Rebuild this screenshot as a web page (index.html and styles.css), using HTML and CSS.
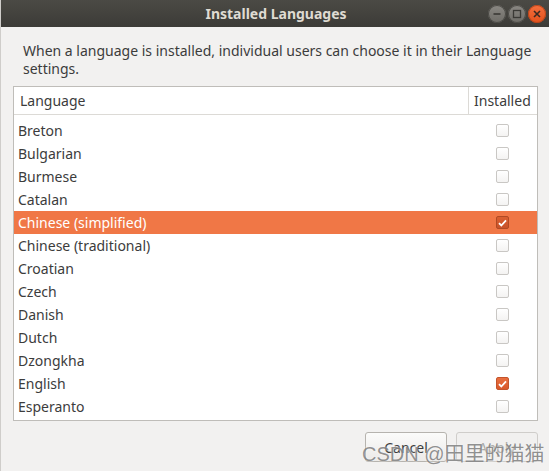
FILE: index.html
```html
<!DOCTYPE html>
<html>
<head>
<meta charset="utf-8">
<link rel="stylesheet" href="styles.css">
</head>
<body>
<div class="window">
  <div class="titlebar">
    <div></div>
    <div class="title">Installed Languages</div>
    <div class="wbtns">
      <span class="wbtn"><svg width="10" height="10" viewBox="0 0 10 10"><path d="M1.5 5h7" stroke="#3a3935" stroke-width="1.6"/></svg></span>
      <span class="wbtn"><svg width="10" height="10" viewBox="0 0 10 10"><rect x="1.5" y="1.5" width="7" height="7" fill="none" stroke="#3a3935" stroke-width="1.3"/></svg></span>
      <span class="wbtn close"><svg width="10" height="10" viewBox="0 0 10 10"><path d="M2 2l6 6M8 2l-6 6" stroke="#3a2a22" stroke-width="1.6"/></svg></span>
    </div>
  </div>
  <div class="content">
    <p class="intro">When a language is installed, individual users can choose it in their Language settings.</p>
    <div class="list">
      <div class="head">
        <div class="hcell lang">Language</div>
        <div class="hcell inst">Installed</div>
      </div>
      <div class="rows">
        <div class="row"><span class="name">Breton</span><span class="cb"></span></div>
        <div class="row"><span class="name">Bulgarian</span><span class="cb"></span></div>
        <div class="row"><span class="name">Burmese</span><span class="cb"></span></div>
        <div class="row"><span class="name">Catalan</span><span class="cb"></span></div>
        <div class="row sel"><span class="name">Chinese (simplified)</span><span class="cb on"><svg width="9" height="8" viewBox="0 0 9 8"><path d="M1 4.2l2.3 2.3L8 1.3" fill="none" stroke="#fff" stroke-width="1.8"/></svg></span></div>
        <div class="row"><span class="name">Chinese (traditional)</span><span class="cb"></span></div>
        <div class="row"><span class="name">Croatian</span><span class="cb"></span></div>
        <div class="row"><span class="name">Czech</span><span class="cb"></span></div>
        <div class="row"><span class="name">Danish</span><span class="cb"></span></div>
        <div class="row"><span class="name">Dutch</span><span class="cb"></span></div>
        <div class="row"><span class="name">Dzongkha</span><span class="cb"></span></div>
        <div class="row"><span class="name">English</span><span class="cb on"><svg width="9" height="8" viewBox="0 0 9 8"><path d="M1 4.2l2.3 2.3L8 1.3" fill="none" stroke="#fff" stroke-width="1.8"/></svg></span></div>
        <div class="row"><span class="name">Esperanto</span><span class="cb"></span></div>
      </div>
    </div>
    <div class="actions">
      <button class="btn">Cancel</button>
      <button class="btn disabled">Apply</button>
    </div>
  </div>
  <div class="watermark">CSDN @田里的猫猫</div>
</div>
</body>
</html>
```
FILE: styles.css
```css
html, body {
  margin: 0;
  padding: 0;
}
body {
  width: 549px;
  height: 471px;
  overflow: hidden;
  background: #cfcdca;
  font-family: "Noto Sans", "DejaVu Sans", sans-serif;
  font-size: 14px;
  color: #3c3c3c;
}
.window {
  position: relative;
  margin-left: 1px;
  height: 471px;
  background: #f2f1f0;
}
.titlebar {
  height: 27px;
  background: linear-gradient(#4b4a45, #3c3b37);
  display: grid;
  grid-template-columns: 1fr auto 1fr;
  align-items: center;
}
.title {
  color: #dfdbd2;
  font-weight: bold;
  font-size: 14px;
  padding-left: 2px;
}
.wbtns {
  display: flex;
  justify-content: flex-end;
  gap: 2px;
  padding-right: 3px;
  padding-top: 1px;
}
.wbtn {
  width: 18px;
  height: 18px;
  border-radius: 50%;
  background: linear-gradient(#8a8883, #6d6b66);
  box-shadow: inset 0 0 0 1px #4a4945;
  display: flex;
  align-items: center;
  justify-content: center;
}
.wbtn.close {
  background: linear-gradient(#f36f3e, #e3511c);
  box-shadow: inset 0 0 0 1px #b8441a;
}
.content {
  padding: 15px 10px 0 12px;
}
.intro {
  margin: 0 0 8px 10px;
  line-height: 18px;
  width: 510px;
}
.list {
  width: 523px;
  height: 333px;
  border: 1px solid #bfbdb9;
  background: #ffffff;
}
.head {
  display: flex;
  height: 27px;
  border-bottom: 1px solid #dcdad6;
}
.hcell {
  display: flex;
  align-items: center;
}
.hcell.lang {
  flex: 1;
  padding-left: 6px;
  border-right: 1px solid #dcdad6;
}
.hcell.inst {
  width: 63px;
  padding-left: 5px;
}
.rows {
  padding-top: 4px;
}
.row {
  height: 23px;
  display: flex;
  align-items: center;
}
.row .name {
  flex: 1;
  padding-left: 4px;
}
.row.sel {
  background: #f07746;
  color: #ffffff;
}
.cb {
  width: 11px;
  height: 11px;
  margin-right: 28px;
  border: 1px solid #c9c7c4;
  border-radius: 2px;
  background: linear-gradient(#ffffff, #f4f3f2);
  display: flex;
  align-items: center;
  justify-content: center;
}
.cb.on {
  background: linear-gradient(#e86f3f, #d9582a);
  border-color: #c4542b;
}
.row.sel .cb.on {
  background: linear-gradient(#d95f30, #c8522a);
  border-color: #b04a24;
}
.actions {
  display: flex;
  justify-content: flex-end;
  gap: 9px;
  margin-top: 11px;
  width: 525px;
}
.btn {
  width: 82px;
  height: 30px;
  font-family: inherit;
  font-size: 14px;
  color: #3c3c3c;
  border: 1px solid #b6b3ae;
  border-radius: 3px;
  background: linear-gradient(#fbfbfa, #eceae8);
  padding: 0;
}
.btn.disabled {
  color: #a9a7a3;
  border-color: #cfcdca;
  background: #f1f0ef;
}
.watermark {
  position: absolute;
  left: 361px;
  top: 438px;
  font-size: 20px;
  color: rgba(110, 110, 110, 0.75);
  text-shadow: 0 0 2px rgba(255, 255, 255, 0.8);
  font-family: "Liberation Sans", "Noto Sans CJK SC", sans-serif;
  white-space: nowrap;
}
```
